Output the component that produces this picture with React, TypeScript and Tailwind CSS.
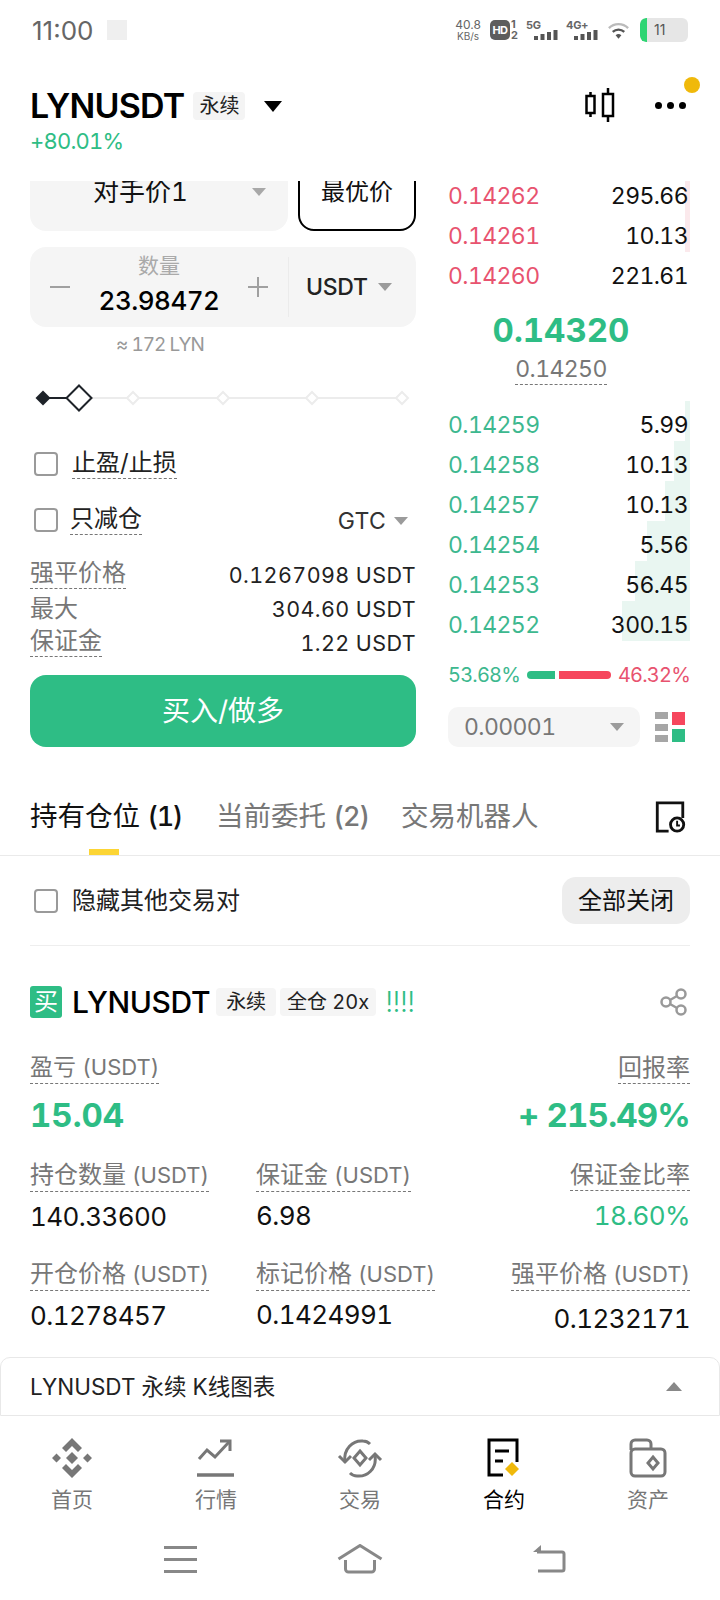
import type { ReactNode } from 'react'

const font = { fontFamily: 'Inter, "Noto Sans CJK SC", sans-serif' }

const asks = [
  ['0.14262', '295.66', 5],
  ['0.14261', '10.13', 5],
  ['0.14260', '221.61', 0],
] as const

const bids = [
  ['0.14259', '5.99', 5],
  ['0.14258', '10.13', 16],
  ['0.14257', '10.13', 25],
  ['0.14254', '5.56', 43],
  ['0.14253', '56.45', 55],
  ['0.14252', '300.15', 68],
] as const

function Caret({ className = 'border-t-[#9b9b9b]' }: { className?: string }) {
  return (
    <span
      className={`inline-block h-0 w-0 border-x-[7px] border-t-[8px] border-x-transparent ${className}`}
    />
  )
}

function Check({ className = '' }: { className?: string }) {
  return (
    <span
      className={`block size-6 rounded-[4px] border-2 border-[#9a9a9a] bg-white ${className}`}
    />
  )
}

function Dotted({ children, className = '' }: { children: ReactNode; className?: string }) {
  return (
    <span className={`border-b border-dashed border-[#777] leading-none ${className}`}>
      {children}
    </span>
  )
}

function Signal({ label }: { label: string }) {
  return (
    <div className="mr-2 flex h-[20px] w-[32px] flex-col">
      <span className="text-[11px] font-bold leading-[10px] tracking-[-0.3px]">{label}</span>
      <svg width="24" height="10" viewBox="0 0 24 10" fill="#555" className="self-end">
        <rect x="0" y="6" width="4" height="4" />
        <rect x="6.500" y="4" width="4" height="6" />
        <rect x="13" y="2" width="4" height="8" />
        <rect x="19.500" y="0" width="4" height="10" />
      </svg>
    </div>
  )
}

function StatusBar() {
  return (
    <div className="flex h-[60px] items-center justify-between pr-8 pl-8 normal-nums">
      <div className="flex items-center gap-[14px]">
        <span className="text-[26px] text-[#666]">11:00</span>
        <span className="size-5 bg-[#efefef]" />
      </div>
      <div className="flex items-center text-[#666]">
        <div className="mr-[9px] flex w-[26px] flex-col items-center text-[12px] leading-[12px]">
          <span>40.8</span>
          <span className="text-[10px] leading-[10px]">KB/s</span>
        </div>
        <span className="flex h-5 w-5 items-center justify-center rounded-[5px] bg-[#5d5d5d] text-[11px] font-bold tracking-[-0.5px] text-white">
          HD
        </span>
        <div className="mr-2 ml-[1px] flex w-[7px] flex-col text-[11px] font-bold leading-[11px]">
          <span>1</span>
          <span>2</span>
        </div>
        <Signal label="5G" />
        <Signal label="4G+" />
        <svg width="25" height="22" viewBox="0 0 26 22" fill="none" className="mr-[9px]">
          <path d="M3 9a14 14 0 0 1 20 0" stroke="#bbb" strokeWidth="2.4" />
          <path d="M7 13a9 9 0 0 1 12 0" stroke="#555" strokeWidth="2.4" />
          <path d="M10 16.500a4.500 4.500 0 0 1 6 0L13 20z" fill="#555" />
        </svg>
        <div className="flex h-[24px] w-[48px] items-center overflow-hidden rounded-[6px] bg-[#e6e6e6]">
          <span className="h-full w-[7px] rounded-l-[6px] bg-[#2ed573]" />
          <span className="ml-[7px] text-[14px] leading-none text-[#555]">11</span>
        </div>
      </div>
    </div>
  )
}

function Header() {
  return (
    <div className="relative flex h-[121px] justify-between px-[30px] pt-[26px]">
      <div>
        <div className="flex items-center">
          <span className="text-[34px] font-semibold leading-[40px] tracking-[-0.8px] text-black">LYNUSDT</span>
          <span className="ml-[9px] flex h-[28px] w-[52px] items-center justify-center rounded-[4px] bg-[#f4f4f4] text-[20px] text-[#222]">
            永续
          </span>
          <span className="ml-[19px] h-0 w-0 border-x-[9px] border-t-[11px] border-x-transparent border-t-black" />
        </div>
        <div className="mt-[1px] text-[22px] leading-[28px] tracking-[-0.8px] text-[#2ebd85]">+80.01%</div>
      </div>
      <div className="flex items-center gap-[40px] self-start pt-[2px] pr-[4px]">
        <svg width="30" height="34" viewBox="0 0 30 34" fill="none" stroke="#000" strokeWidth="2.500">
          <path d="M5.500 4v25M23 0v34" />
          <rect x="1.500" y="8" width="8" height="17" fill="#fff" />
          <rect x="18" y="6" width="10" height="22" fill="#fff" />
        </svg>
        <div className="flex gap-[5px]">
          <span className="size-[7px] rounded-full bg-black" />
          <span className="size-[7px] rounded-full bg-black" />
          <span className="size-[7px] rounded-full bg-black" />
        </div>
      </div>
      <span className="absolute top-[17px] right-[20px] h-4 w-4 rounded-full bg-[#f0b90b]" />
    </div>
  )
}

function InfoRow({ label, value, dotted }: { label: string; value: string; dotted?: boolean }) {
  return (
    <div className="flex h-[34px] items-center justify-between">
      {dotted ? (
        <Dotted className="pb-[3px] text-[24px] text-[#777]">{label}</Dotted>
      ) : (
        <span className="text-[24px] text-[#777]">{label}</span>
      )}
      <span className="text-[21.5px] tracking-[0.4px] text-[#222]">{value}</span>
    </div>
  )
}

function OrderForm() {
  return (
    <div className="flex w-[386px] flex-col">
      <div className="-mt-[28px] flex gap-[10px]">
        <div className="flex h-[78px] w-[258px] items-center rounded-[16px] bg-[#f5f5f5]">
          <span className="ml-[63px] text-[26px] leading-none text-[#111]">对手价1</span>
          <Caret className="ml-[64px] border-t-[#a8a8a8]" />
        </div>
        <div className="flex h-[78px] w-[118px] items-center justify-center rounded-[16px] border-2 border-black text-[24px] text-[#111]">
          最优价
        </div>
      </div>
      <div className="mt-[16px] flex h-[80px] items-center rounded-[16px] bg-[#f5f5f5]">
        <div className="flex w-[258px] items-center justify-between px-5">
          <span className="h-[2px] w-5 bg-[#a0a0a0]" />
          <div className="flex flex-col items-center pb-[4px]">
            <span className="text-[21px] leading-[28px] text-[#aaa]">数量</span>
            <span className="mt-[4px] text-[26px] font-medium leading-[34px] tracking-[-0.5px] text-black">23.98472</span>
          </div>
          <span className="relative h-[2px] w-5 bg-[#a0a0a0]">
            <span className="absolute -top-[9px] left-[9px] h-5 w-[2px] bg-[#a0a0a0]" />
          </span>
        </div>
        <div className="flex h-[60px] flex-1 items-center justify-between border-l border-[#ebebeb] pr-[24px] pl-[17px]">
          <span className="text-[23px] font-medium tracking-[-0.3px] text-[#222]">USDT</span>
          <Caret className="border-t-[#9b9b9b]" />
        </div>
      </div>
      <div className="mt-[5px] pl-[86px] text-[19px] leading-[26px] tracking-[-1px] text-[#999]">≈ 172 LYN</div>
      <svg width="386" height="30" viewBox="0 0 386 30" fill="none" className="mt-[25px]">
        <path d="M13 15H372" stroke="#ececec" strokeWidth="2" />
        <path d="M13 15H49" stroke="#1e2329" strokeWidth="2" />
        <path d="M13 7.500l7.500 7.500-7.500 7.500-7.500-7.500z" fill="#1e2329" />
        <path d="M49 2.500l12.500 12.500-12.500 12.500-12.500-12.500z" fill="#fff" stroke="#1e2329" strokeWidth="2" />
        {[103, 193, 282, 372].map((x) => (
          <path key={x} d={`M${x} 9l6 6-6 6-6-6z`} fill="#fff" stroke="#ececec" strokeWidth="2" />
        ))}
      </svg>
      <label className="mt-[38px] flex h-[28px] items-center pl-[4px]">
        <Check className="-mt-[3px]" />
        <Dotted className="ml-[14px] pb-[3px] text-[24px] text-[#222]">止盈/止损</Dotted>
      </label>
      <div className="mt-[28px] flex h-[28px] items-center justify-between pl-[4px]">
        <div className="flex items-center">
          <Check className="-mt-[3px]" />
          <Dotted className="ml-3 pb-[3px] text-[24px] text-[#222]">只减仓</Dotted>
        </div>
        <div className="flex items-center gap-[8px] pr-[8px]">
          <span className="text-[23px] tracking-[0.3px] text-[#333]">GTC</span>
          <Caret />
        </div>
      </div>
      <div className="mt-[23px] flex flex-col text-[22px] leading-[34px]">
        <InfoRow label="强平价格" value="0.1267098 USDT" dotted />
        <InfoRow label="最大" value="304.60 USDT" />
        <InfoRow label="保证金" value="1.22 USDT" dotted />
      </div>
      <button className="mt-[15px] flex h-[72px] items-center justify-center rounded-[16px] bg-[#2ebd85] text-[28px] text-white">
        买入/做多
      </button>
    </div>
  )
}

function BookRow({ price, size, bar, up }: { price: string; size: string; bar: number; up?: boolean }) {
  return (
    <div className="relative flex h-10 items-center justify-between pr-[2px] text-[23px] tracking-[-0.6px]">
      <span
        className={`absolute -top-[4px] right-0 bottom-[4px] ${up ? 'bg-[#e9f6f1]' : 'bg-[#fbe9ec]'}`}
        style={{ width: bar }}
      />
      <span className={`relative ${up ? 'text-[#3db88f]' : 'text-[#e8536f]'}`}>{price}</span>
      <span className="relative text-[#111]">{size}</span>
    </div>
  )
}

function OrderBook() {
  return (
    <div className="-mt-[5px] flex w-[242px] flex-col">
      {asks.map(([price, size, bar]) => (
        <BookRow key={price} price={price} size={size} bar={bar} />
      ))}
      <div className="mt-[14px] flex flex-col items-center pr-[16px]">
        <span className="text-[33px] font-bold leading-[40px] text-[#2ebd85]">0.14320</span>
        <span className="mt-[4px] border-b border-dashed border-[#777] text-[23px] leading-[30px] tracking-[-0.6px] text-[#777]">
          0.14250
        </span>
      </div>
      <div className="mt-[20px] flex flex-col">
        {bids.map(([price, size, bar]) => (
          <BookRow key={price} price={price} size={size} bar={bar} up />
        ))}
      </div>
      <div className="mt-[15px] flex items-center justify-between text-[20px] tracking-[-0.8px]">
        <span className="text-[#3db88f]">53.68%</span>
        <div className="flex gap-1">
          <span className="h-2 w-[28px] rounded-l-full bg-[#2ebd85]" />
          <span className="h-2 w-[52px] rounded-r-full bg-[#f6465d]" />
        </div>
        <span className="text-[#e8536f]">46.32%</span>
      </div>
      <div className="mt-[17px] flex items-center justify-between">
        <div className="flex h-10 w-[192px] items-center justify-between rounded-[10px] bg-[#f5f5f5] pr-4 pl-4">
          <span className="text-[23px] tracking-[-0.6px] text-[#777]">0.00001</span>
          <Caret />
        </div>
        <svg width="30" height="30" viewBox="0 0 30 30" className="mr-[5px]">
          <rect x="0" y="0" width="13" height="7" fill="#a6a6a6" />
          <rect x="0" y="12" width="13" height="7" fill="#a6a6a6" />
          <rect x="0" y="23" width="13" height="7" fill="#a6a6a6" />
          <rect x="17" y="0" width="13" height="13" fill="#f6465d" />
          <rect x="17" y="17" width="13" height="13" fill="#2ebd85" />
        </svg>
      </div>
    </div>
  )
}

function Tabs() {
  return (
    <div className="relative mt-[38px] flex h-[71px] items-center border-b border-[#eaeaea] px-[30px] pb-[6px] text-[27.5px]">
      <span className="text-[#111]">
        持有仓位 <span className="text-[27px] font-medium tracking-[-1.3px]">(1)</span>
      </span>
      <span className="ml-[34px] text-[#777]">
        当前委托 <span className="text-[27px] font-medium tracking-[-1px]">(2)</span>
      </span>
      <span className="ml-[32px] text-[#777]">交易机器人</span>
      <svg width="33" height="34" viewBox="0 0 34 36" fill="none" stroke="#111" strokeWidth="3" className="mr-[3px] ml-auto">
        <path d="M15 33H3V3h27v16" />
        <circle cx="24" cy="26" r="7" />
        <path d="M24 22v5h3" strokeWidth="2" />
      </svg>
      <span className="absolute bottom-0 left-[89px] h-[6px] w-[30px] bg-[#fcd535]" />
    </div>
  )
}

function Stat({
  label,
  unit,
  value,
  align = 'left',
  green,
  valueClass = 'mt-[8px]',
}: {
  label: string
  unit?: string
  value: string
  align?: 'left' | 'right'
  green?: boolean
  valueClass?: string
}) {
  return (
    <div className={`flex flex-col ${align === 'right' ? 'items-end' : 'items-start'}`}>
      <span className="border-b border-dashed border-[#777] pb-[2px] text-[24px] leading-[27px] text-[#777]">
        {label}
        {unit && <span className="text-[22px]"> {unit}</span>}
      </span>
      <span
        className={`text-[26px] leading-[34px] tracking-[-0.6px] ${valueClass} ${green ? 'text-[#2ebd85]' : 'text-[#111]'}`}
      >
        {value}
      </span>
    </div>
  )
}

function Position() {
  return (
    <div className="flex flex-col px-[30px]">
      <div className="flex h-[90px] items-center justify-between border-b border-[#eeeeee]">
        <div className="flex items-center">
          <Check className="ml-[4px]" />
          <span className="ml-[14px] text-[24px] text-[#222]">隐藏其他交易对</span>
        </div>
        <span className="flex h-[47px] w-[128px] items-center justify-center rounded-[14px] bg-[#ededed] text-[24px] text-[#111]">
          全部关闭
        </span>
      </div>
      <div className="mt-[40px] flex h-[32px] items-center">
        <span className="flex size-[32px] items-center justify-center rounded-[3px] bg-[#2ebd85] text-[24px] leading-none text-white">
          买
        </span>
        <span className="ml-[10px] text-[30px] font-medium tracking-[-0.4px] text-black">LYNUSDT</span>
        <span className="ml-[6px] flex h-7 w-[60px] items-center justify-center rounded-[4px] bg-[#f5f5f5] text-[20px] text-[#222]">
          永续
        </span>
        <span className="ml-1 flex h-7 w-[96px] items-center justify-center rounded-[4px] bg-[#f5f5f5] text-[20px] text-[#222]">
          全仓 20x
        </span>
        <span className="ml-[9px] text-[28px] font-light tracking-[-0.5px] text-[#2ebd85]">!!!!</span>
        <svg width="28" height="28" viewBox="0 0 28 28" fill="none" stroke="#999" strokeWidth="2.500" className="mr-[2px] ml-auto">
          <circle cx="6" cy="14" r="4.500" />
          <circle cx="21" cy="6" r="4.500" />
          <circle cx="21" cy="22" r="4.500" />
          <path d="M10 12l7-4M10 16l7 4" />
        </svg>
      </div>
      <div className="mt-[36px] flex justify-between">
        <div className="flex flex-col items-start">
          <span className="border-b border-dashed border-[#777] pb-[2px] text-[23px] leading-[27px] text-[#777]">
            盈亏 <span className="text-[22px]">(USDT)</span>
          </span>
          <span className="mt-[12px] text-[33px] font-bold leading-[38px] text-[#2ebd85]">15.04</span>
        </div>
        <div className="flex flex-col items-end">
          <span className="border-b border-dashed border-[#777] pb-[2px] text-[24px] leading-[27px] text-[#777]">
            回报率
          </span>
          <span className="mt-[12px] text-[33px] font-bold leading-[38px] tracking-[-0.8px] text-[#2ebd85]">+ 215.49%</span>
        </div>
      </div>
      <div className="mt-[27px] grid grid-cols-[226px_1fr_auto]">
        <Stat label="持仓数量" unit="(USDT)" value="140.33600" />
        <Stat label="保证金" unit="(USDT)" value="6.98" valueClass="mt-[7px]" />
        <Stat label="保证金比率" value="18.60%" align="right" green />
      </div>
      <div className="mt-[26px] grid grid-cols-[226px_1fr_auto]">
        <Stat label="开仓价格" unit="(USDT)" value="0.1278457" />
        <Stat label="标记价格" unit="(USDT)" value="0.1424991" valueClass="mt-[7px]" />
        <Stat label="强平价格" unit="(USDT)" value="0.1232171" align="right" valueClass="mt-[11px]" />
      </div>
    </div>
  )
}

function HomeIcon() {
  return (
    <svg width="40" height="40" viewBox="0 0 40 40" fill="#777">
      <path d="M20 0l10 10-4 4-6-6-6 6-4-4z" />
      <path d="M20 40l10-10-4-4-6 6-6-6-4 4z" />
      <path d="M20 14l6 6-6 6-6-6z" />
      <path d="M4.500 15.500l4.500 4.500-4.500 4.500L0 20zM35.500 15.500l4.500 4.500-4.500 4.500-4.500-4.500z" />
    </svg>
  )
}

function MarketIcon() {
  return (
    <svg width="40" height="40" viewBox="0 0 40 40" fill="none" stroke="#777" strokeWidth="3">
      <path d="M3 21l8-9 8 7 14-15" />
      <path d="M24 3h10v10" />
      <path d="M1 37h37" strokeWidth="3.500" />
    </svg>
  )
}

function TradeIcon() {
  return (
    <svg width="46" height="40" viewBox="0 0 46 40" fill="none" stroke="#777" strokeWidth="3">
      <path d="M8 24C6 11 16 2 26 3c3 0 5 1 7 3" />
      <path d="M38 18c2 13-8 21-18 20-3 0-5-1-7-3" />
      <path d="M2 18l6 6 6-6M32 22l6-6 6 6" />
      <path d="M23 13l6 7-6 7-6-7z" />
    </svg>
  )
}

function FuturesIcon() {
  return (
    <svg width="34" height="40" viewBox="0 0 34 40" fill="none" stroke="#000" strokeWidth="3">
      <path d="M16 37H2V2h28v22" />
      <path d="M8 13h14M8 23h8" />
      <path d="M25 24l7 7-7 7-7-7z" fill="#f0b90b" stroke="none" />
    </svg>
  )
}

function WalletIcon() {
  return (
    <svg width="38" height="40" viewBox="0 0 38 40" fill="none" stroke="#777" strokeWidth="3">
      <path d="M2 12V6a4 4 0 0 1 4-4h12a4 4 0 0 1 4 4v4" />
      <rect x="2" y="11" width="34" height="27" rx="4" />
      <path d="M24 19l5 6-5 6-5-6z" />
    </svg>
  )
}

const navItems = [
  { label: '首页', icon: <HomeIcon /> },
  { label: '行情', icon: <MarketIcon /> },
  { label: '交易', icon: <TradeIcon /> },
  { label: '合约', icon: <FuturesIcon />, active: true },
  { label: '资产', icon: <WalletIcon /> },
]

function BottomNav() {
  return (
    <div className="flex flex-col">
      <div className="grid h-[112px] grid-cols-5 pt-[22px]">
        {navItems.map((item) => (
          <div key={item.label} className="flex flex-col items-center">
            <span className="flex h-[50px] items-start justify-center">{item.icon}</span>
            <span className={`text-[21px] leading-[24px] ${item.active ? 'text-black' : 'text-[#777]'}`}>
              {item.label}
            </span>
          </div>
        ))}
      </div>
      <div className="flex h-[72px] items-start pt-[16px]">
        <div className="mt-[2px] ml-[164px] flex flex-col gap-[9px]">
          <span className="block h-[3px] w-[33px] bg-[#888]" />
          <span className="block h-[3px] w-[33px] bg-[#888]" />
          <span className="block h-[3px] w-[33px] bg-[#888]" />
        </div>
        <svg width="46" height="30" viewBox="0 0 46 30" fill="none" stroke="#888" strokeWidth="3" className="ml-[140px]">
          <path d="M1.500 15L23 1.500 44.500 15" />
          <path d="M8.500 16v9a3 3 0 0 0 3 3h23a3 3 0 0 0 3-3v-9" />
        </svg>
        <svg width="34" height="30" viewBox="0 0 34 30" fill="none" stroke="#888" strokeWidth="3" className="ml-[149px]">
          <path d="M5 8h25a2 2 0 0 1 2 2v15a2 2 0 0 1-2 2H6" />
          <path d="M9 1L1 8h8z" fill="#888" stroke="none" />
        </svg>
      </div>
    </div>
  )
}

export default function App() {
  return (
    <div className="flex h-[1600px] w-[720px] flex-col overflow-hidden bg-white tabular-nums" style={font}>
      <StatusBar />
      <Header />
      <div className="flex gap-[32px] overflow-hidden pl-[30px]">
        <OrderForm />
        <OrderBook />
      </div>
      <Tabs />
      <Position />
      <div className="mt-auto flex flex-col">
        <div className="flex h-[59px] items-center justify-between rounded-t-[10px] border border-[#e8e8e8] pr-[37px] pl-[29px] text-[22.5px] text-[#222]">
          <span>LYNUSDT 永续 K线图表</span>
          <span className="h-0 w-0 border-x-[8px] border-b-[9px] border-x-transparent border-b-[#888]" />
        </div>
        <BottomNav />
      </div>
    </div>
  )
}
